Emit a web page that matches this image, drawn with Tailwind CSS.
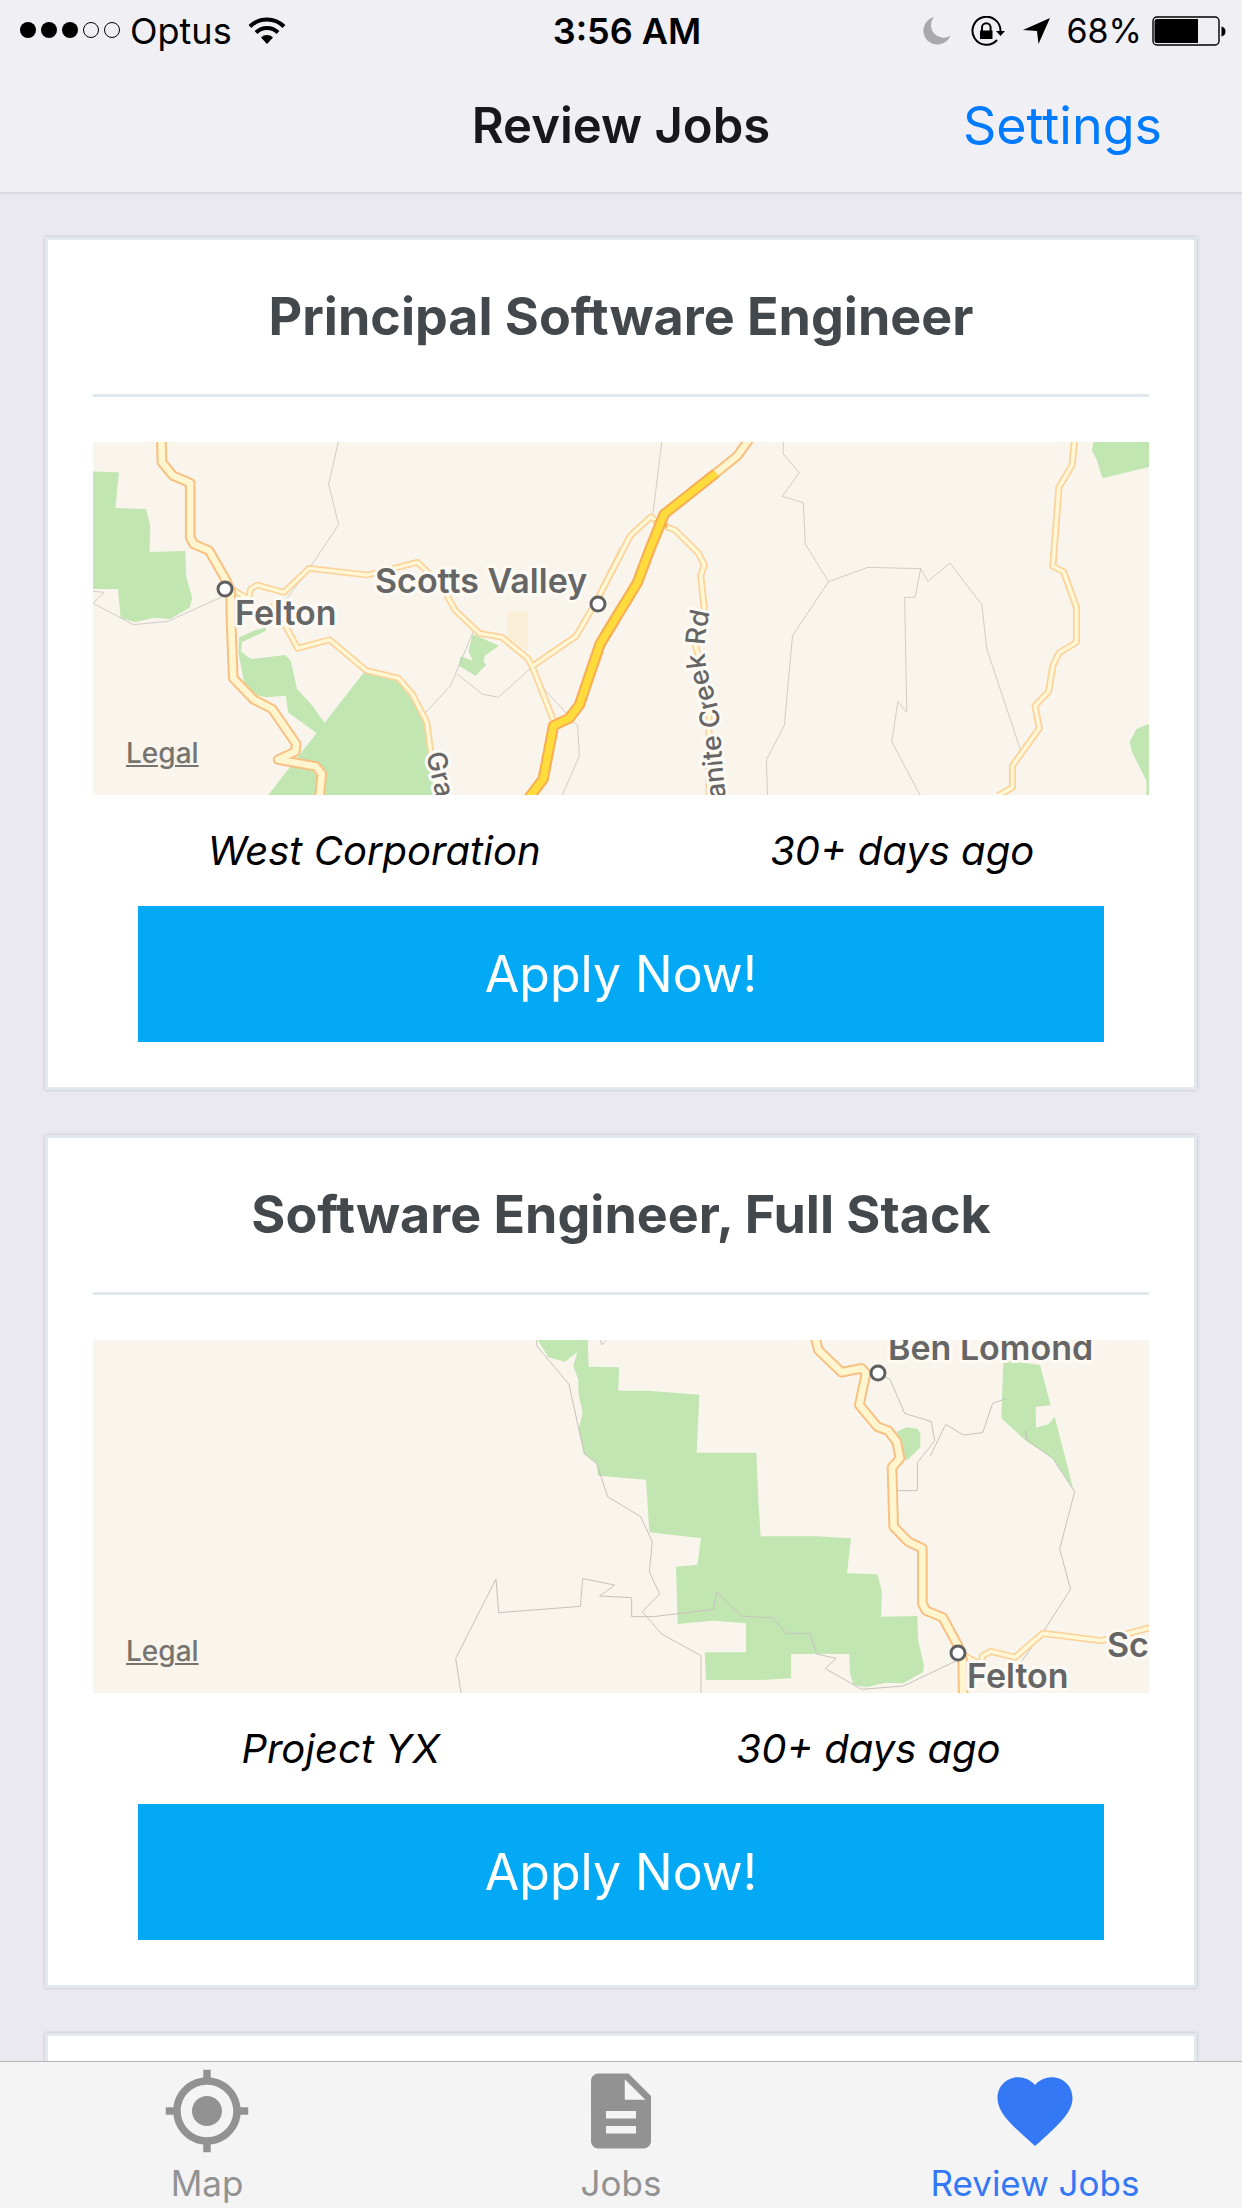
<!DOCTYPE html>
<html lang="en">
<head>
<meta charset="utf-8">
<meta name="viewport" content="width=device-width, initial-scale=1">
<title>Review Jobs</title>
<script src="https://cdn.jsdelivr.net/npm/@tailwindcss/browser@4"></script>
</head>
<body class="flex h-screen flex-col bg-[#e9e9ef] font-['Inter',sans-serif] text-black">

<header class="shrink-0 border-b-2 border-[#d9d9df] bg-[#efeff4]">
  <!-- Status bar -->
  <div class="flex h-[60px] items-center pt-0.5 pr-4 pl-5 text-[36px] leading-[40px]">
    <div class="flex flex-1 items-center">
      <svg class="mr-2 h-5 w-[102px]" viewBox="0 0 102 20" aria-label="Signal strength">
        <circle cx="8" cy="9" r="8"/><circle cx="29" cy="9" r="8"/><circle cx="50" cy="9" r="8"/>
        <g fill="none" stroke="#000" stroke-width="1"><circle cx="71" cy="9" r="7.500"/><circle cx="92" cy="9" r="7.500"/></g>
      </svg>
      <span>Optus</span>
      <svg class="ml-4 h-7 w-[38px]" viewBox="0 0 38 28" aria-label="Wi-Fi">
        <g fill="none" stroke="#000" stroke-width="4"><path d="M2 9.500a24 24 0 0 1 34 0"/><path d="M8 15.500a15.500 15.500 0 0 1 22 0"/></g>
        <path d="M19 27l-6-6.500a8.500 8.500 0 0 1 12 0z"/>
      </svg>
    </div>
    <div class="pl-2 font-semibold">3:56 AM</div>
    <div class="flex flex-1 items-center justify-end">
      <svg class="mr-5 h-7 w-7" viewBox="0 0 28 28" fill="#a9a9ad" aria-label="Do not disturb"><path d="M11 0A14 14 0 1 0 27.500 18.500 12.500 12.500 0 0 1 11 0z"/></svg>
      <svg class="mr-[18px] h-[30px] w-[34px]" viewBox="0 0 34 30" aria-label="Rotation lock">
        <path d="M29.500 15A14 14 0 1 0 26 24" fill="none" stroke="#000" stroke-width="2"/>
        <path d="M25 15h9l-4.500 5z"/><path d="M9 14.500h12.500v8.500H9z"/>
        <path d="M11 15v-3.500a4.300 4.300 0 0 1 8.600 0V15" fill="none" stroke="#000" stroke-width="2"/>
      </svg>
      <svg class="mr-4 h-7 w-[27px]" viewBox="0 0 27 28" aria-label="Location"><path d="M27 1L15.500 27 14 14 0 13z"/></svg>
      <span class="text-[34px]">68%</span>
      <svg class="ml-2.5 h-[30px] w-[74px]" viewBox="0 0 74 30" aria-label="Battery">
        <rect x="1" y="1" width="66" height="28" rx="4" fill="none" stroke="#000" stroke-width="1.400"/>
        <path d="M5 3h41v24H5q-2.500 0-2.500-2.500v-19Q2.500 3 5 3zM69.500 10.500q4 1 4 5t-4 5z"/>
      </svg>
    </div>
  </div>
  <!-- Navigation bar -->
  <div class="grid h-[132px] grid-cols-3 items-center px-20 leading-[60px]">
    <h1 class="col-start-2 text-center text-[49px] font-semibold whitespace-nowrap text-[#18181b]">Review Jobs</h1>
    <button type="button" class="justify-self-end text-[52px] text-[#007aff]">Settings</button>
  </div>
</header>

<main class="flex min-h-0 flex-1 flex-col gap-[45px] overflow-y-auto px-[45px] pt-[43px] [scrollbar-width:none]">

  <article class="shrink-0 border-3 border-[#e1e8ee] bg-white p-[45px] shadow-[0_0_3px_rgba(0,0,0,0.2)]">
    <h2 class="text-center text-[52px] leading-[64px] font-bold text-[#43484d]">Principal Software Engineer</h2>
    <hr class="my-[45px] border-t-3 border-[#e1e8ee]">
    <div class="relative">
      <svg class="block h-[353px] w-full bg-[#f9f5ed]" viewBox="0 0 1056 353" preserveAspectRatio="xMidYMid slice" role="img" aria-label="Map of Scotts Valley and Felton">
        <!-- Western part -->
        <svg x="-13" y="-13" width="540" height="380" viewBox="0 0 1568 1140" preserveAspectRatio="none">
          <g fill="#c2e6b2">
            <path d="M30 127L113 130 103 237 192 240 204 290 202 369 306 366 308 440 326 508 318 536 262 570 215 566 160 580 118 568 110 480 30 480z"/>
            <path d="M540 595L505 605 462 625 460 670 480 780 500 795 540 805 598 800 604 850 690 915 712 885 675 830 630 780 612 695 596 678 497 690 468 668 470 640 540 605z"/>
            <path d="M828 725L545 1100H1030L1015 960 1005 880 930 745z"/>
            <path d="M1140 615L1217 650 1175 680 1172 700 1180 708 1148 740 1100 710 1105 682 1140 695 1128 667z"/>
          </g>
          <path d="M1240 547h60v120l-60-40z" fill="#faf0d7"/>
          <g fill="none" stroke="#bdbab5" stroke-width="2">
            <path d="M752 30L722 165 751 287 670 412 600 510"/>
            <path d="M30 486L70 490 38 523 155 587 255 577 420 500"/>
            <path d="M1145 600L1076 770 1000 855"/><path d="M1095 735L1168 795 1215 805 1315 712"/>
            <path d="M1330 760L1445 890 1450 980 1400 1100"/>
          </g>
          <defs>
            <g id="west-minor"><path d="M422 470L490 510 495 480 515 468 592 490 665 418 835 438 980 400 1050 470 1090 545 1160 613 1225 625 1300 688 1313 712 1375 875"/><path d="M1313 712L1440 622 1503 510 1610 290"/><path d="M560 520L632 658 725 632 830 724 925 748 965 795 1007 880 1020 980"/></g>
            <path id="west-main" d="M236 20L238 100 270 140 320 162V325L330 345 375 365 422 450 438 490V560L445 748 505 812 558 840 628 945 625 968 575 992 685 1012 702 1035 695 1110"/>
            <path id="west-highway" d="M1290 1125L1345 1050 1375 890 1420 868 1450 828 1510 645 1619 460"/>
          </defs>
          <g fill="none" stroke-linejoin="round">
            <use href="#west-minor" stroke="#fbd39b" stroke-width="20"/><use href="#west-minor" stroke="#fff7d5" stroke-width="10"/>
            <use href="#west-main" stroke="#f8c083" stroke-width="31"/><use href="#west-main" stroke="#fff6cf" stroke-width="19"/>
            <use href="#west-highway" stroke="#f8ae55" stroke-width="33"/><use href="#west-highway" stroke="#ffdc3c" stroke-width="21"/>
          </g>
        </svg>
        <!-- Eastern part -->
        <svg x="507" y="-13" width="560" height="380" viewBox="0 0 1568 1140" preserveAspectRatio="none">
          <path d="M1384 30L1377 65 1390 90 1407 148 1545 112V30zM1545 882L1502 900 1483 940 1490 970 1530 1055V1100H1545z" fill="#c2e6b2"/>
          <g fill="none" stroke="#bdbab5" stroke-width="2">
            <path d="M174 30L148 255"/>
            <path d="M513 30V75L558 131 510 202 569 221 575 345 640 458 539 620 516 890 466 992 469 1100"/>
            <path d="M640 458L750 415 898 419 918 457 980 402 1069 527 1083 660 1178 965"/>
            <path d="M898 419L882 505H853L859 850 834 818 817 938 897 1100"/>
          </g>
          <defs>
            <g id="east-minor"><path d="M-60 620L0 495 85 320 143 263 165 285 210 303 275 372 292 408 282 440 292 540 265 640 290 740 305 860V1100"/><path d="M1330 20L1322 108 1285 175 1268 412 1298 428 1334 535V640L1285 672 1268 710 1256 788 1218 830 1230 898 1155 1010V1075L1115 1100"/></g>
            <path id="east-trunk" d="M325 132L385 80 425 20"/>
            <path id="east-highway" d="M-58 828L0 645 105 460 140 360 180 255 325 132"/>
          </defs>
          <g fill="none" stroke-linejoin="round">
            <use href="#east-minor" stroke="#fbd39b" stroke-width="20"/><use href="#east-minor" stroke="#fff7d5" stroke-width="10"/>
            <use href="#east-trunk" stroke="#f8c083" stroke-width="30"/><use href="#east-trunk" stroke="#fff6cf" stroke-width="18"/>
            <path d="M150 275l38-15v38z" fill="#f8ae55"/>
            <use href="#east-highway" stroke="#f8ae55" stroke-width="32"/><use href="#east-highway" stroke="#ffdc3c" stroke-width="20"/>
          </g>
        </svg>
        <g fill="#fff" stroke="#5f5f5f" stroke-width="3"><circle cx="132" cy="147" r="7"/><circle cx="505" cy="162" r="7"/></g>
        <defs>
          <path id="creek-rd" d="M640 440C638 400 632 350 630 331L626 274C624 250 614 240 612 214 611 200 613 185 617 170"/>
          <path id="creek-rd-south" d="M333 312L354 400"/>
        </defs>
        <g fill="#666" stroke="#fdfaf4" stroke-width="6" stroke-linejoin="round" paint-order="stroke" font-weight="600" font-size="34">
          <text x="142" y="183">Felton</text>
          <text x="282" y="151">Scotts Valley</text>
          <g font-size="27" font-weight="500">
            <text text-anchor="end"><textPath href="#creek-rd" startOffset="100%">anite Creek Rd</textPath></text>
            <text><textPath href="#creek-rd-south">Gra</textPath></text>
          </g>
        </g>
      </svg>
      <a href="#legal" class="absolute bottom-6 left-[33px] text-[28px] leading-[36px] font-medium text-[#77746f] underline decoration-2 underline-offset-2">Legal</a>
    </div>
    <div class="flex h-[111px] items-center justify-around text-[40px] leading-[52px] italic">
      <p>West Corporation</p>
      <p>30+ days ago</p>
    </div>
    <div class="px-[45px]">
      <button type="button" class="h-[136px] w-full bg-[#03a9f4] text-[50px] leading-[64px] text-white">Apply Now!</button>
    </div>
  </article>

  <article class="shrink-0 border-3 border-[#e1e8ee] bg-white p-[45px] shadow-[0_0_3px_rgba(0,0,0,0.2)]">
    <h2 class="text-center text-[52px] leading-[64px] font-bold text-[#43484d]">Software Engineer, Full Stack</h2>
    <hr class="my-[45px] border-t-3 border-[#e1e8ee]">
    <div class="relative">
      <svg class="block h-[353px] w-full bg-[#f9f5ed]" viewBox="0 0 1056 353" preserveAspectRatio="xMidYMid slice" role="img" aria-label="Map of Ben Lomond and Felton">
        <svg x="347" y="-10" width="740" height="370" viewBox="0 0 2220 1110">
          <g fill="#c2e6b2">
            <path d="M290 25H443L446 110 537 112 535 182H625L778 194 770 368H949L955 510 962 619H1130L1233 625 1221 730 1312 733 1326 785 1323 860 1432 858 1434 930 1452 1005 1450 1026 1390 1060 1335 1058 1280 1072 1240 1065 1230 1030 1228 972H1053V1045L960 1050H798L794 967H918V880L820 872 713 882 708 710 772 704 783 625 628 607 618 449 474 437 470 400 433 372 415 300 428 250 415 190V150L400 108 412 66 375 95 325 82z"/>
            <path d="M1370 305L1400 292 1432 296 1441 310V352L1405 388 1390 393z"/>
            <path d="M1690 90L1800 105 1832 226 1787 230 1788 293 1825 283 1844 260 1900 477 1838 385 1755 330 1684 265z"/>
          </g>
          <g fill="none" stroke="#c6c3be" stroke-width="3">
            <path d="M288 25L292 50 387 163 415 290 433 372 470 400 503 500 602 560 637 635 628 725 659 792 607 845 665 912 783 977V1100"/>
            <path d="M65 1100L47 985 168 747 176 848 421 829 428 746 524 765 479 798 575 803V860H640L820 838 830 785 905 858 998 864 1038 910H1110L1130 972 1188 985 1156 1016 1265 1078 1390 1068 1550 992"/>
            <path d="M480 30l6 14 12-12"/>
            <path d="M1330 140L1350 148 1394 250 1474 275 1484 332 1432 398V482H1370"/>
            <path d="M1471 378L1517 283 1570 315 1628 308 1658 220 1700 205"/>
            <path d="M1757 300L1760 330 1838 385 1904 485 1859 657 1892 778 1808 908 1740 1000"/>
          </g>
          <defs>
            <path id="felton-road" d="M1553 965L1624 1005 1627 978 1652 964 1725 982 1808 910 1985 932 2140 890"/>
            <path id="lomond-road" d="M1125 20L1135 60 1205 127 1265 115 1278 130 1258 225 1312 290 1345 302 1370 335 1380 385 1356 412 1361 590 1405 635 1447 655V820L1458 842 1508 862 1553 945 1568 990 1570 1110"/>
          </defs>
          <g fill="none" stroke-linejoin="round">
            <use href="#felton-road" stroke="#fbd39b" stroke-width="21"/><use href="#felton-road" stroke="#fff7d5" stroke-width="11"/>
            <use href="#lomond-road" stroke="#f8c083" stroke-width="32"/><use href="#lomond-road" stroke="#fff6cf" stroke-width="20"/>
          </g>
        </svg>
        <g fill="#fff" stroke="#5f5f5f" stroke-width="3"><circle cx="785" cy="33" r="7"/><circle cx="865" cy="313" r="7"/></g>
        <g fill="#666" stroke="#fdfaf4" stroke-width="6" stroke-linejoin="round" paint-order="stroke" font-weight="600" font-size="34">
          <text x="795" y="20">Ben Lomond</text>
          <text x="874" y="348">Felton</text>
          <text x="1014" y="317">Sc</text>
        </g>
      </svg>
      <a href="#legal" class="absolute bottom-6 left-[33px] text-[28px] leading-[36px] font-medium text-[#77746f] underline decoration-2 underline-offset-2">Legal</a>
    </div>
    <div class="flex h-[111px] items-center justify-around text-[40px] leading-[52px] italic">
      <p>Project YX</p>
      <p>30+ days ago</p>
    </div>
    <div class="px-[45px]">
      <button type="button" class="h-[136px] w-full bg-[#03a9f4] text-[50px] leading-[64px] text-white">Apply Now!</button>
    </div>
  </article>

  <article class="shrink-0 border-3 border-[#e1e8ee] bg-white p-[45px] shadow-[0_0_3px_rgba(0,0,0,0.2)]"></article>
</main>

<nav class="grid shrink-0 grid-cols-3 border-t border-[#b5b5b8] bg-[#f4f4f4] pt-1 text-[35px] leading-[46px] text-[#929292]">
  <a href="#map" class="flex flex-col items-center gap-1 pb-0.5">
    <svg class="size-[90px]" viewBox="0 0 24 24" fill="currentColor" aria-hidden="true"><path d="M12 8c-2.210 0-4 1.790-4 4s1.790 4 4 4 4-1.790 4-4-1.790-4-4-4zm8.940 3c-.46-4.170-3.770-7.480-7.940-7.940V1h-2v2.060C6.830 3.520 3.520 6.830 3.060 11H1v2h2.060c.46 4.170 3.770 7.480 7.940 7.940V23h2v-2.060c4.170-.46 7.480-3.770 7.940-7.940H23v-2h-2.060zM12 19c-3.870 0-7-3.130-7-7s3.130-7 7-7 7 3.130 7 7-3.130 7-7 7z"/></svg>
    <span>Map</span>
  </a>
  <a href="#jobs" class="flex flex-col items-center gap-1 pb-0.5">
    <svg class="size-[90px]" viewBox="0 0 24 24" fill="currentColor" aria-hidden="true"><path d="M14 2H6c-1.100 0-1.990.9-1.990 2L4 20c0 1.100.89 2 1.990 2H18c1.100 0 2-.9 2-2V8l-6-6zm2 16H8v-2h8v2zm0-4H8v-2h8v2zm-3-5V3.500L18.500 9H13z"/></svg>
    <span>Jobs</span>
  </a>
  <a href="#review" aria-current="page" class="flex flex-col items-center gap-1 pb-0.5 text-[#3478f6]">
    <svg class="size-[90px]" viewBox="0 0 24 24" fill="currentColor" aria-hidden="true"><path d="M12 21.350l-1.450-1.320C5.400 15.360 2 12.280 2 8.500 2 5.420 4.420 3 7.500 3c1.740 0 3.410.81 4.500 2.090C13.090 3.810 14.760 3 16.500 3 19.580 3 22 5.420 22 8.500c0 3.780-3.400 6.860-8.550 11.540L12 21.350z"/></svg>
    <span>Review Jobs</span>
  </a>
</nav>
</body>
</html>
